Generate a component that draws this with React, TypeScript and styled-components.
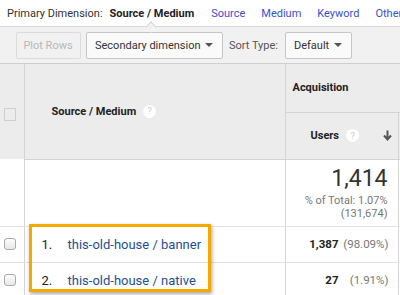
import React from "react";
import styled, { createGlobalStyle } from "styled-components";

const Global = createGlobalStyle`
  html, body { margin: 0; padding: 0; background: #fff; }
  body { font-family: Roboto, "Liberation Sans", Arial, sans-serif; width: 400px; height: 295px; overflow: hidden; }
`;

const Page = styled.div`
  position: relative;
  width: 400px;
  height: 295px;
  overflow: hidden;
`;

const DimBar = styled.div`
  height: 26px;
  display: flex;
  align-items: center;
  padding-left: 7px;
  font-size: 11px;
  white-space: nowrap;
  color: #333;
`;

const DimLabel = styled.span`
  margin-right: 7px;
  flex-shrink: 0;
`;

const DimActive = styled.span`
  position: relative;
  font-weight: bold;
  color: #222;
  margin-right: 17px;
  flex-shrink: 0;
`;

const Notch = styled.span`
  position: absolute;
  left: 37px;
  top: 16px;
  width: 7px;
  height: 7px;
  background: #f1f1f1;
  border-left: 1px solid #d6d6d6;
  border-top: 1px solid #d6d6d6;
  transform: rotate(45deg);
  z-index: 2;
`;

const DimLink = styled.span`
  color: #3a4fd0;
  margin-right: 16px;
  flex-shrink: 0;
`;

const Toolbar = styled.div`
  height: 36px;
  background: #f1f1f1;
  border-top: 1px solid #d6d6d6;
  border-bottom: 1px solid #cfcfcf;
  display: flex;
  align-items: center;
  padding-left: 16px;
  gap: 5px;
  font-size: 11px;
  color: #444;
  white-space: nowrap;
`;

const Btn = styled.div<{ $disabled?: boolean; $w: number }>`
  box-sizing: border-box;
  flex-shrink: 0;
  width: ${(p) => p.$w}px;
  height: 27px;
  border: 1px solid ${(p) => (p.$disabled ? "#dcdcdc" : "#c6c6c6")};
  border-radius: 2px;
  background: ${(p) => (p.$disabled ? "#f1f1f1" : "#fafafa")};
  color: ${(p) => (p.$disabled ? "#b8b8b8" : "#333")};
  display: flex;
  align-items: center;
  justify-content: ${(p) => (p.$disabled ? "center" : "space-between")};
  padding: 0 9px 0 8px;
`;

const Caret = styled.span`
  width: 0;
  height: 0;
  border-left: 4px solid transparent;
  border-right: 4px solid transparent;
  border-top: 4px solid #555;
`;

const SortLabel = styled.span`
  margin: 0 2px 0 1px;
  color: #555;
`;

const Table = styled.table`
  border-collapse: collapse;
  table-layout: fixed;
  width: 420px;
  font-size: 11px;
  color: #222;
`;

const HeadCell = styled.th<{ $h?: number }>`
  background: #ececec;
  border: 1px solid #d4d4d4;
  border-top: none;
  ${(p) => (p.$h ? `height: ${p.$h}px;` : "")}
  padding: 0;
  font-weight: bold;
  text-align: left;
  vertical-align: middle;
  box-sizing: border-box;
`;

const FirstCol = styled.th`
  background: #ececec;
  border-right: 1px solid #d4d4d4;
  padding: 0;
  box-sizing: border-box;
`;

const HeadBox = styled.div`
  width: 12px;
  height: 13px;
  margin-left: 4px;
  margin-top: 6px;
  border: 1px solid #cfcfcf;
  box-sizing: border-box;
`;

const HeadInner = styled.div<{ $pl: number }>`
  display: flex;
  align-items: center;
  padding-left: ${(p) => p.$pl}px;
  color: #222;
`;

const Help = styled.span`
  display: inline-flex;
  align-items: center;
  justify-content: center;
  width: 13px;
  height: 13px;
  border-radius: 50%;
  background: #fff;
  color: #c8c8c8;
  font-size: 9px;
  font-weight: normal;
  margin-left: 7px;
`;

const SortArrow = styled.span`
  margin-left: auto;
  margin-right: 6px;
  display: flex;
`;

const Cell = styled.td<{ $right?: boolean; $h: number }>`
  height: ${(p) => p.$h}px;
  border-right: 1px solid #d4d4d4;
  border-bottom: 1px solid #e2e2e2;
  padding: 0;
  text-align: ${(p) => (p.$right ? "right" : "left")};
  vertical-align: middle;
  box-sizing: border-box;
`;

const Total = styled.div`
  padding-right: 10px;
  color: #777;
  line-height: 13px;
  font-size: 11px;
`;

const TotalNum = styled.div`
  font-size: 23px;
  color: #333;
  line-height: 26px;
  margin-bottom: 2px;
`;

const RowBox = styled.div`
  width: 12px;
  height: 12px;
  margin-left: 4px;
  border: 1px solid #a9a9a9;
  border-radius: 3px;
  background: linear-gradient(#fdfdfd, #e8e8e8);
  box-sizing: border-box;
`;

const NameWrap = styled.div`
  display: flex;
  padding-left: 17px;
  font-size: 13px;
`;

const Idx = styled.span`
  width: 26px;
  color: #222;
`;

const Link = styled.span`
  color: #1d4f91;
`;

const Metric = styled.div`
  display: flex;
  justify-content: flex-end;
  padding-right: 9px;
  font-size: 11.5px;
`;

const Num = styled.span`
  font-weight: bold;
  color: #222;
`;

const Pct = styled.span<{ $w: number }>`
  width: ${(p) => p.$w}px;
  text-align: right;
  color: #777;
`;

const Highlight = styled.div`
  position: absolute;
  left: 29px;
  top: 224px;
  width: 182px;
  height: 68px;
  box-sizing: border-box;
  border: 3px solid #f5a800;
  box-shadow: 1px 2px 4px rgba(0, 0, 0, 0.35);
  pointer-events: none;
`;

const rows = [
  { i: "1.", name: "this-old-house / banner", n: "1,387", p: "(98.09%)", pw: 50, h: 36 },
  { i: "2.", name: "this-old-house / native", n: "27", p: "(1.91%)", pw: 50, h: 36 },
];

export default function App() {
  return (
    <Page>
      <Global />
      <DimBar>
        <DimLabel>Primary Dimension:</DimLabel>
        <DimActive>
          Source / Medium
          <Notch />
        </DimActive>
        <DimLink>Source</DimLink>
        <DimLink>Medium</DimLink>
        <DimLink>Keyword</DimLink>
        <DimLink>Other</DimLink>
      </DimBar>
      <Toolbar>
        <Btn $disabled $w={65}>Plot Rows</Btn>
        <Btn $w={137}>
          Secondary dimension <Caret />
        </Btn>
        <SortLabel>Sort Type:</SortLabel>
        <Btn $w={67}>
          Default <Caret />
        </Btn>
      </Toolbar>
      <Table>
        <colgroup>
          <col style={{ width: 24 }} />
          <col style={{ width: 261 }} />
          <col style={{ width: 113 }} />
          <col style={{ width: 22 }} />
        </colgroup>
        <thead>
          <tr>
            <FirstCol rowSpan={2}>
              <HeadBox />
            </FirstCol>
            <HeadCell rowSpan={2}>
              <HeadInner $pl={27}>
                Source / Medium <Help>?</Help>
              </HeadInner>
            </HeadCell>
            <HeadCell $h={48} colSpan={2}>
              <HeadInner $pl={7}>Acquisition</HeadInner>
            </HeadCell>
          </tr>
          <tr>
            <HeadCell $h={47}>
              <HeadInner $pl={25}>
                Users <Help>?</Help>
                <SortArrow>
                  <svg width="9" height="11" viewBox="0 0 9 11">
                    <path d="M4.5 0.5v8.5M1 5.5l3.5 4 3.5-4" fill="none" stroke="#555" strokeWidth="2" />
                  </svg>
                </SortArrow>
              </HeadInner>
            </HeadCell>
            <HeadCell />
          </tr>
        </thead>
        <tbody>
          <tr>
            <Cell $h={67} />
            <Cell $h={67} />
            <Cell $h={67} $right>
              <Total>
                <TotalNum>1,414</TotalNum>
                % of Total: 1.07%
                <br />
                (131,674)
              </Total>
            </Cell>
            <Cell $h={67} />
          </tr>
          {rows.map((r) => (
            <tr key={r.i}>
              <Cell $h={r.h}>
                <RowBox />
              </Cell>
              <Cell $h={r.h}>
                <NameWrap>
                  <Idx>{r.i}</Idx>
                  <Link>{r.name}</Link>
                </NameWrap>
              </Cell>
              <Cell $h={r.h}>
                <Metric>
                  <Num>{r.n}</Num>
                  <Pct $w={r.pw}>{r.p}</Pct>
                </Metric>
              </Cell>
              <Cell $h={r.h} />
            </tr>
          ))}
        </tbody>
      </Table>
      <Highlight />
    </Page>
  );
}
